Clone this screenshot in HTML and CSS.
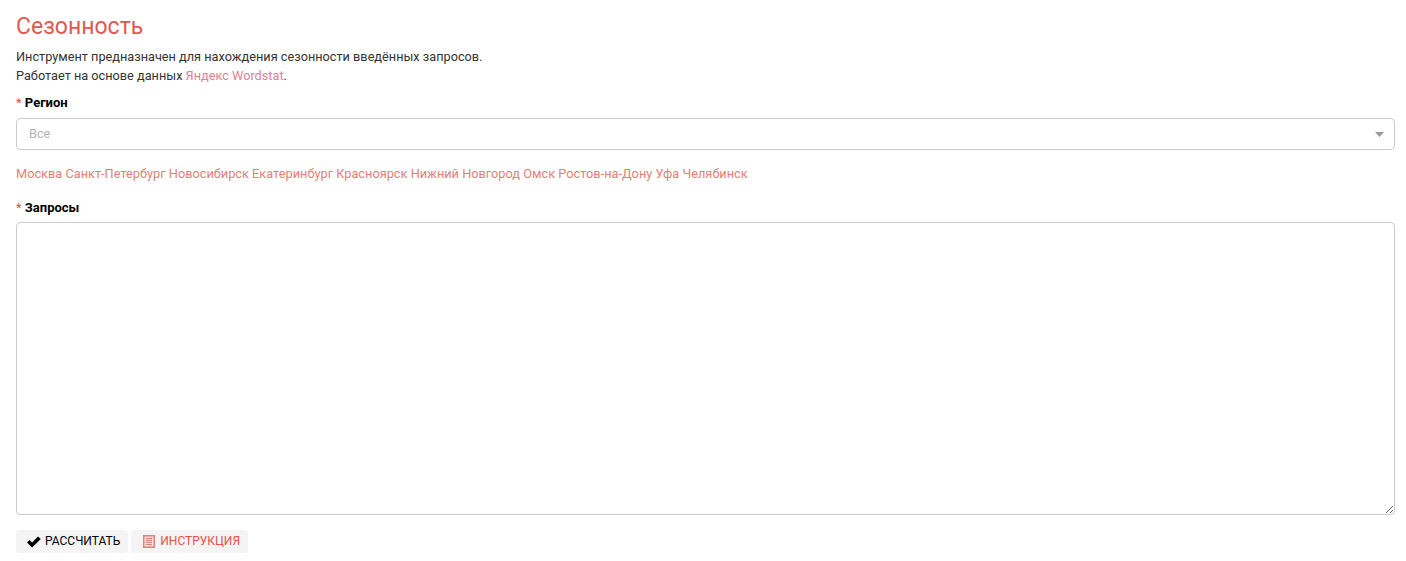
FILE: index.html
```html
<!DOCTYPE html>
<html lang="ru">
<head>
<meta charset="utf-8">
<title>Сезонность</title>
<link rel="stylesheet" href="styles.css">
</head>
<body>
<main class="page">
<h1 class="title">Сезонность</h1>
<p class="intro">Инструмент предназначен для нахождения сезонности введённых запросов.<br>Работает на основе данных <a class="link" href="#">Яндекс Wordstat</a>.</p>
<label class="label"><span class="req">*</span> Регион</label>
<div class="select"><span class="select-value">Все</span><svg class="caret" width="9" height="5" viewBox="0 0 9 5"><path d="M0 0h9L4.5 5z" fill="#999"/></svg></div>
<div class="cities">
<a class="city" href="#">Москва</a> <a class="city" href="#">Санкт-Петербург</a> <a class="city" href="#">Новосибирск</a> <a class="city" href="#">Екатеринбург</a> <a class="city" href="#">Красноярск</a> <a class="city" href="#">Нижний Новгород</a> <a class="city" href="#">Омск</a> <a class="city" href="#">Ростов-на-Дону</a> <a class="city" href="#">Уфа</a> <a class="city" href="#">Челябинск</a>
</div>
<label class="label label-q"><span class="req">*</span> Запросы</label>
<textarea class="area"></textarea>
<div class="actions">
<button class="btn btn-dark"><svg width="14" height="12" viewBox="0 0 14 12"><path d="M0 6.4l2.5-2.5 2.6 2.6L11 .4 13.8 3 5.1 11.6z" fill="#000"/></svg><span class="btn-text">РАССЧИТАТЬ</span></button>
<button class="btn btn-red"><svg width="12" height="13" viewBox="0 0 12 13"><rect x=".75" y=".75" width="10.5" height="11.5" fill="#f8e3e1" stroke="#e67f78" stroke-width="1.5"/><path d="M3 3.5h6M3 5.5h6M3 7.5h6M3 9.5h6" fill="none" stroke="#e67f78"/></svg><span class="btn-text">ИНСТРУКЦИЯ</span></button>
</div>
</main>
</body>
</html>
```
FILE: styles.css
```css
html, body { margin: 0; padding: 0; background: #fff; }
body { font-family: Roboto, sans-serif; font-size: 12.72px; color: #333; }
.page { padding: 14px 11px 0 16px; }
.title { margin: 0; font-size: 23px; font-weight: 400; line-height: 25px; color: #dd5a51; }
.intro { margin: 8px 0 0; line-height: 19px; }
.link { color: #de7f95; text-decoration: none; }
.label { display: block; margin-top: 9px; font-size: 13px; font-weight: 700; color: #000; line-height: 18px; }
.req { color: #e0534a; font-weight: 400; }
.select { box-sizing: border-box; display: flex; align-items: center; justify-content: space-between; margin-top: 6px; height: 32px; padding: 0 10px 0 12px; border: 1px solid #ccc; border-radius: 4px; color: #b4b4b4; }
.select-value { position: relative; top: -1px; }
.cities { margin-top: 15px; font-size: 12.78px; line-height: 18px; }
.city { color: #e27f78; text-decoration: none; }
.label-q { margin-top: 16px; }
.area { display: block; box-sizing: border-box; width: 100%; height: 293px; margin: 5px 0 0; border: 1px solid #ccc; border-radius: 4px; background: #fff; }
.actions { display: flex; gap: 3px; margin-top: 15px; }
.btn { display: flex; align-items: center; height: 23px; border: 0; border-radius: 4px; background: #f4f4f4; font: 12px Roboto, sans-serif; }
.btn-text { margin-top: -2px; }
.btn-dark { gap: 4px; padding: 0 8px 0 11px; color: #000; }
.btn-red { gap: 5px; padding: 0 8px 0 12px; color: #e0534a; }
```
